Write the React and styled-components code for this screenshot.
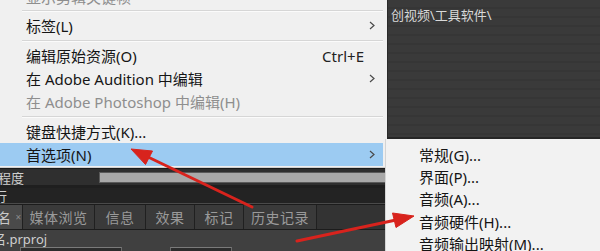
import React from "react"
import styled, { createGlobalStyle } from "styled-components"

const GlobalStyle = createGlobalStyle`
  html, body {
    margin: 0;
    padding: 0;
    background: #2a2a2a;
  }
  body {
    font-family: "Segoe UI", "Noto Sans", "Noto Sans CJK SC", sans-serif;
  }
`

const Screen = styled.div`
  position: relative;
  width: 600px;
  height: 251px;
  overflow: hidden;
  display: grid;
  grid-template-columns: 387px 213px;
  background: #2a2a2a;
`

const LeftColumn = styled.div`
  display: flex;
  flex-direction: column;
  min-width: 0;
`

const RightColumn = styled.div`
  display: flex;
  flex-direction: column;
  min-width: 0;
`

/* main context menu */
const Menu = styled.div`
  background: #f0f0f0;
  padding: 0 4px 1px 0;
  display: flex;
  flex-direction: column;
  border-bottom: 1px solid #cfcfcf;
`

const CutRow = styled.div`
  height: 7px;
  overflow: hidden;
  display: flex;
  align-items: flex-end;
`

const CutText = styled.div`
  padding-left: 26px;
  font-size: 15px;
  line-height: 23px;
  margin-bottom: -2px;
  color: #8e8e8e;
  white-space: nowrap;
`

const Item = styled.div`
  height: 23px;
  display: flex;
  align-items: center;
  padding-left: 26px;
  padding-right: 8px;
  font-size: 15px;
  color: ${p => (p.disabled ? "#8e8e8e" : "#151515")};
  background: ${p => (p.active ? "#9ccbf2" : "transparent")};
  white-space: nowrap;
`

const Label = styled.span`
  flex: 1;
`

const Shortcut = styled.span`
  font-size: 15px;
  color: #222;
  margin-right: 11px;
`

const Separator = styled.div`
  height: 7px;
  margin-left: 22px;
  display: flex;
  flex-direction: column;
  justify-content: center;
  &::before {
    content: "";
    height: 1px;
    background: #d6d6d6;
  }
  &::after {
    content: "";
    height: 1px;
    background: #fbfbfb;
  }
`

const Chevron = () => (
  <svg width="6" height="9" viewBox="0 0 6 9">
    <polyline points="1,1 5,4.5 1,8" fill="none" stroke="#4a4a4a" strokeWidth="1.2" />
  </svg>
)

/* dark panels under the menu */
const ProgressRow = styled.div`
  height: 16px;
  background: #2f2f2f;
  display: flex;
  align-items: center;
  border-top: 1px solid #1b1b1b;
`

const PanelText = styled.span`
  font-size: 13px;
  color: #cfcfcf;
  margin-left: ${p => p.shift || 0}px;
  width: ${p => p.w || "auto"};
  white-space: nowrap;
  flex-shrink: 0;
`

const Bar = styled.div`
  flex: 1;
  height: 9px;
  background: #a9a9a9;
  border: 1px solid #5a5a5a;
  margin-right: 1px;
`

const Gap = styled.div`
  height: ${p => p.h}px;
  background: ${p => p.bg};
`

const TitleRow = styled.div`
  height: 15px;
  background: #232323;
  display: flex;
  align-items: center;
  border-bottom: 1px solid #4a4a4a;
`

const Tabs = styled.div`
  height: 24px;
  display: flex;
  background: #2c2c2c;
  border-top: 1px solid #1c1c1c;
  border-bottom: 1px solid #1c1c1c;
`

const Tab = styled.div`
  width: ${p => p.w}px;
  flex-shrink: 0;
  display: flex;
  align-items: center;
  justify-content: ${p => (p.active ? "flex-start" : "center")};
  gap: 4px;
  font-size: 14px;
  letter-spacing: 0.5px;
  color: ${p => (p.active ? "#c8c8c8" : "#9a9a9a")};
  background: ${p => (p.active ? "#4a4a4a" : "#3a3a3a")};
  border-right: 1px solid #202020;
  overflow: hidden;
  white-space: nowrap;
`

const Close = styled.span`
  font-size: 10px;
  color: #8a8a8a;
`

const TabFill = styled.div`
  flex: 1;
  background: #333;
`

const ProjectRow = styled.div`
  flex: 1;
  background: #404040;
  display: flex;
  flex-direction: column;
`

const ProjectName = styled.div`
  height: 16px;
  display: flex;
  align-items: center;
`

const FieldRow = styled.div`
  display: flex;
  margin-top: 1px;
  gap: 48px;
  padding-left: 20px;
`

const Field = styled.div`
  width: ${p => p.w}px;
  height: 8px;
  border-top: 1px solid #7a7a7a;
  border-left: 1px solid #6a6a6a;
  border-right: 1px solid #6a6a6a;
  background: #2c2c2c;
`

/* right side */
const DarkArea = styled.div`
  height: 139px;
  flex-shrink: 0;
  background: repeating-linear-gradient(
    to bottom,
    #3a3a3a 0px,
    #3a3a3a 7px,
    #363636 7px,
    #363636 9px
  );
  border-left: 1px solid #2a2a2a;
  border-bottom: 2px solid #262626;
  padding: 5px 0 0 3px;
  box-sizing: border-box;
`

const PathText = styled.div`
  font-size: 13px;
  color: #d9d9d9;
  white-space: nowrap;
`

const SubMenu = styled.div`
  flex: 1;
  margin-left: -2px;
  background: #f2f2f2;
  border-left: 1px solid #d4d4d4;
  padding-top: 4px;
  display: flex;
  flex-direction: column;
`

const SubItem = styled.div`
  height: 22.3px;
  display: flex;
  align-items: center;
  padding-left: 33px;
  font-size: 15px;
  color: #151515;
  white-space: nowrap;
`

const Overlay = styled.svg`
  position: absolute;
  left: 0;
  top: 0;
  pointer-events: none;
`

const Arrows = () => (
  <Overlay width="600" height="251" viewBox="0 0 600 251">
    <g fill="#d8231d" stroke="#d8231d">
      <line x1="252" y1="207" x2="148" y2="157" strokeWidth="3" strokeLinecap="round" />
      <polygon points="131,149 152.5,151 145.5,164.5" strokeWidth="1" strokeLinejoin="round" />
      <line x1="297" y1="241" x2="396" y2="220" strokeWidth="3" strokeLinecap="round" />
      <polygon points="414,216 396,227.5 392.5,213" strokeWidth="1" strokeLinejoin="round" />
    </g>
  </Overlay>
)

const mainItems = [
  { sep: true },
  { label: "标签(L)", sub: true },
  { sep: true },
  { label: "编辑原始资源(O)", shortcut: "Ctrl+E" },
  { label: "在 Adobe Audition 中编辑", sub: true },
  { label: "在 Adobe Photoshop 中编辑(H)", disabled: true },
  { sep: true },
  { label: "键盘快捷方式(K)..." },
  { label: "首选项(N)", sub: true, active: true },
]

const subItems = ["常规(G)...", "界面(P)...", "音频(A)...", "音频硬件(H)...", "音频输出映射(M)..."]

const tabs = [
  { label: "媒体浏览", w: 71 },
  { label: "信息", w: 50 },
  { label: "效果", w: 48 },
  { label: "标记", w: 48 },
  { label: "历史记录", w: 72 },
]

const App = () => {
  return (
    <>
      <GlobalStyle />
      <Screen>
        <LeftColumn>
          <Menu>
            <CutRow>
              <CutText>显示剪辑关键帧</CutText>
            </CutRow>
            {mainItems.map((it, i) =>
              it.sep ? (
                <Separator key={i} />
              ) : (
                <Item key={i} disabled={it.disabled} active={it.active}>
                  <Label>{it.label}</Label>
                  {it.shortcut && <Shortcut>{it.shortcut}</Shortcut>}
                  {it.sub && <Chevron />}
                </Item>
              )
            )}
          </Menu>
          <ProgressRow>
            <PanelText shift={-2} w="101px">程度</PanelText>
            <Bar />
          </ProgressRow>
          <Gap h={3} bg="#1f1f1f" />
          <TitleRow>
            <PanelText shift={-6}>行</PanelText>
          </TitleRow>
          <Tabs>
            <Tab active w={22}>
              <PanelText shift={-3} style={{ color: "#c8c8c8", fontSize: 14 }}>名</PanelText>
              <Close>×</Close>
            </Tab>
            {tabs.map(t => (
              <Tab key={t.label} w={t.w}>{t.label}</Tab>
            ))}
            <TabFill />
          </Tabs>
          <ProjectRow>
            <ProjectName>
              <PanelText shift={-7}>名.prproj</PanelText>
            </ProjectName>
            <FieldRow>
              <Field w={100} />
              <Field w={60} />
            </FieldRow>
          </ProjectRow>
        </LeftColumn>
        <RightColumn>
          <DarkArea>
            <PathText>创视频\工具软件\</PathText>
          </DarkArea>
          <SubMenu>
            {subItems.map(s => (
              <SubItem key={s}>{s}</SubItem>
            ))}
          </SubMenu>
        </RightColumn>
        <Arrows />
      </Screen>
    </>
  )
}

export default App
